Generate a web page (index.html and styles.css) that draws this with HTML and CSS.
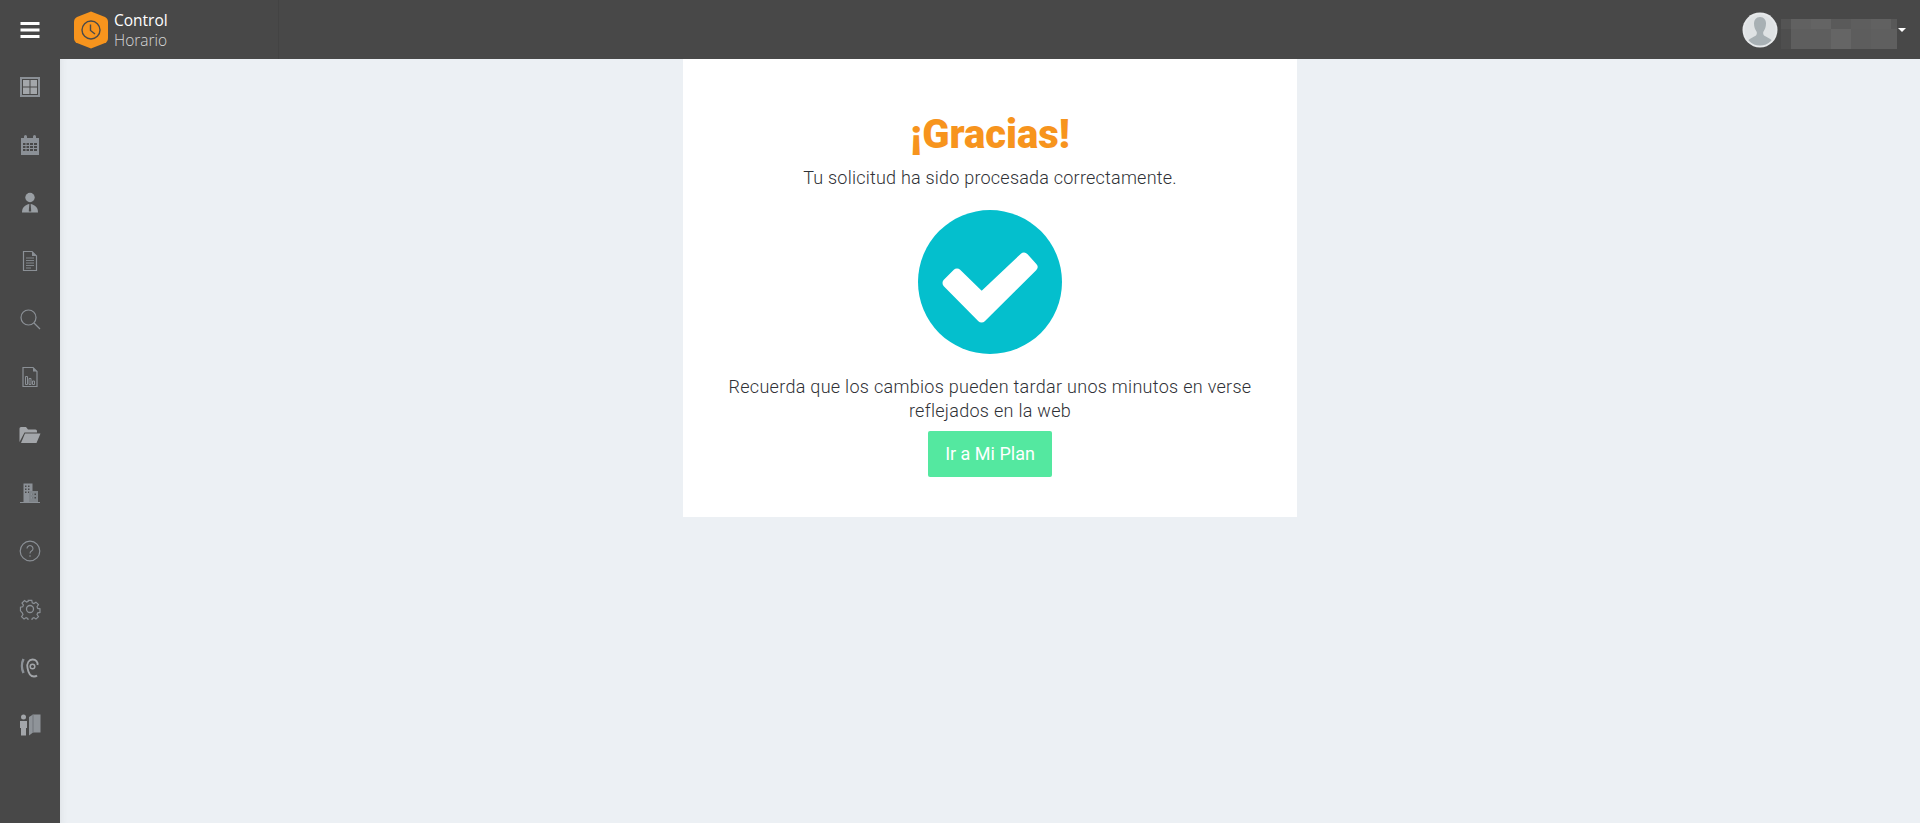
FILE: index.html
```html
<!DOCTYPE html>
<html lang="es">
<head>
    <meta charset="utf-8">
    <meta name="viewport" content="width=device-width, initial-scale=1">
    <title>Control Horario</title>
    <link rel="stylesheet" href="styles.css">
</head>
<body>
    <div class="page">
        <header class="topbar">
            <div class="menu_toggle">
                <svg width="20" height="16" viewBox="0 0 20 16"><path d="M0.500 1.500h19M0.500 8h19M0.500 14.500h19" stroke="#fff" stroke-width="3" fill="none"/></svg>
            </div>
            <div class="brand">
                <svg class="brand_logo" width="34" height="38" viewBox="0 0 34 38">
                    <path d="M17 0.500 L31 6 Q34 7.500 34 11 L34 27 Q34 30.500 31 32 L17 37.500 L3 32 Q0 30.500 0 27 L0 11 Q0 7.500 3 6 Z" fill="#f7941d"/>
                    <circle cx="17" cy="19" r="9" fill="none" stroke="#4a4a4a" stroke-width="1.400"/>
                    <path d="M16.500 13.500 V19.500 L21 23" fill="none" stroke="#4a4a4a" stroke-width="1.400"/>
                </svg>
                <div class="brand_name">
                    <span class="brand_top">Control</span>
                    <span class="brand_sub">Horario</span>
                </div>
            </div>
            <div class="user_box">
                <svg class="user_avatar" width="36" height="36" viewBox="0 0 36 36">
                    <circle cx="18" cy="18" r="17.500" fill="#e6e8ea"/>
                    <clipPath id="avatar"><circle cx="18" cy="18" r="15.500"/></clipPath>
                    <g clip-path="url(#avatar)">
                        <rect width="36" height="36" fill="#dfe2e4"/>
                        <path d="M18 5c-4 0-6 3-6 6.500 0 3 1 6 2.500 8 .6 1 .5 3-.5 4-2 1.500-6 2.500-8 5v8h24v-8c-2-2.500-6-3.500-8-5-1-1-1.100-3-.5-4 1.500-2 2.500-5 2.500-8C24 8 22 5 18 5z" fill="#a8b0b4"/>
                    </g>
                </svg>
                <svg class="user_blur" width="116" height="30" viewBox="0 0 116 30">
                    <rect x="0" y="0" width="10" height="10" fill="#545454"/>
                    <rect x="10" y="0" width="20" height="10" fill="#616161"/>
                    <rect x="30" y="0" width="20" height="10" fill="#646464"/>
                    <rect x="50" y="0" width="20" height="10" fill="#5a5a5a"/>
                    <rect x="70" y="0" width="20" height="10" fill="#5e5e5e"/>
                    <rect x="90" y="0" width="20" height="10" fill="#616161"/>
                    <rect x="110" y="0" width="6" height="10" fill="#585858"/>
                    <rect x="0" y="10" width="10" height="20" fill="#4e4e4e"/>
                    <rect x="10" y="10" width="40" height="20" fill="#5e5e5e"/>
                    <rect x="50" y="10" width="20" height="20" fill="#656565"/>
                    <rect x="70" y="10" width="20" height="20" fill="#5d5d5d"/>
                    <rect x="90" y="10" width="26" height="20" fill="#5f5f5f"/>
                </svg>
                <span class="caret"></span>
            </div>
        </header>

        <nav class="sidebar">
            <a class="side_item"><svg width="20" height="20" viewBox="0 0 20 20"><path fill-rule="evenodd" d="M0 0h20v20H0z M2 2v16h16V2z" fill="#8b9096"/><path d="M3 3h6.500v6.500H3z M10.500 3H17v6.500h-6.500z M3 10.500h6.500V17H3z M10.500 10.500H17V17h-6.500z" fill="#a3a6aa"/></svg></a>
            <a class="side_item"><svg width="22" height="22" viewBox="0 0 22 22"><path fill-rule="evenodd" d="M2 4h3V2.500a1.500 1.500 0 0 1 3 0V4h6V2.500a1.500 1.500 0 0 1 3 0V4h3v17H2z M4 9v2h2.500V9z M7.500 9v2H10V9z M11 9v2h3V9z M15 9v2h3V9z M4 12v2h2.500v-2z M7.500 12v2H10v-2z M11 12v2h3v-2z M15 12v2h3v-2z M4 15v2h2.500v-2z M7.500 15v2H10v-2z M11 15v2h3v-2z M15 15v2h3v-2z" fill="#8b9096"/></svg></a>
            <a class="side_item"><svg width="18" height="22" viewBox="0 0 18 22"><circle cx="9" cy="5.500" r="4.700" fill="#9a9fa4"/><path d="M1 20.500c0-5 2.500-7 7-8.500h2c4.500 1.500 7 3.500 7 8.500z" fill="#9a9fa4"/><path d="M8.300 12h1.400l.5 7.500H7.800z" fill="#4a4a4a"/></svg></a>
            <a class="side_item"><svg width="18" height="22" viewBox="0 0 18 22"><path d="M2.500 1.500h8.500l4.500 4.500v14.500h-13z" fill="none" stroke="#8b9096" stroke-width="1.200"/><path d="M11 1.500v4.500h4.500" fill="#8b9096"/><path d="M5 8h8M5 10.500h8M5 13h8M5 15.500h8M5 18h5" stroke="#80858a" stroke-width="1"/></svg></a>
            <a class="side_item"><svg width="22" height="22" viewBox="0 0 22 22"><circle cx="9.500" cy="9.500" r="7.500" fill="none" stroke="#8b9096" stroke-width="1.200"/><path d="M15 15l6 6" stroke="#8b9096" stroke-width="1.200"/></svg></a>
            <a class="side_item"><svg width="18" height="22" viewBox="0 0 18 22"><path d="M2 1.500h10l4 4v15H2z" fill="none" stroke="#8b9096" stroke-width="1.200"/><path d="M12 1.500v4h4" fill="#8b9096"/><path d="M4.500 18.500v-8h2v8zM8 18.500v-6h2v6zM11.500 18.500v-3.500h2v3.500z" fill="none" stroke="#8b9096" stroke-width="1"/></svg></a>
            <a class="side_item"><svg width="22" height="18" viewBox="0 0 22 18"><path d="M0.500 16V2.500A1.500 1.500 0 0 1 2 1h5l2 2.500h7.500A1.500 1.500 0 0 1 18 5v1.500H5.500zM2 17l4-9.500h15.500L17.500 17z" fill="#a3a6aa"/></svg></a>
            <a class="side_item"><svg width="20" height="20" viewBox="0 0 20 20"><path fill-rule="evenodd" d="M3.500 0.500h9v18.500h-9z M5 2.500v1.500h1.500V2.500z M8 2.500v1.500h1.500V2.500z M5 5.500V7h1.500V5.500z M8 5.500V7h1.500V5.500z M5 8.500V10h1.500V8.500z M8 8.500V10h1.500V8.500z" fill="#8b9096"/><path fill-rule="evenodd" d="M9 8h9v11H9z M11 10.500v1.500h1.500v-1.500z M14.500 10.500v1.500H16v-1.500z M11 14v1.500h1.500V14z M14.500 14v1.500H16V14z" fill="#7f8489"/><path d="M0 19.500h20" stroke="#8b9096"/></svg></a>
            <a class="side_item"><svg width="22" height="22" viewBox="0 0 22 22"><circle cx="11" cy="11" r="9.800" fill="none" stroke="#8b9096" stroke-width="1.200"/><path d="M8 8.500a3 3 0 1 1 4.500 2.600c-1 .6-1.500 1.200-1.500 2.400" fill="none" stroke="#8b9096" stroke-width="1.100"/><circle cx="11" cy="16" r=".8" fill="#8b9096"/></svg></a>
            <a class="side_item"><svg width="22" height="22" viewBox="0 0 22 22"><circle cx="11" cy="11" r="3.500" fill="none" stroke="#8b9096" stroke-width="1.300"/><path d="M9 1.500h4l.5 2.700 1.800.8 2.300-1.600 2.800 2.800-1.600 2.300.8 1.800 2.500.5v4l-2.500.5-.8 1.800 1.600 2.300-2.800 2.800-2.300-1.600-1.800.8-.5 2.500H9l-.5-2.500-1.800-.8-2.300 1.600-2.800-2.800 1.600-2.300-.8-1.800L.4 13V9l2.500-.5.8-1.800-1.600-2.300 2.800-2.800 2.300 1.600 1.800-.8z" transform="translate(1.100 1.100) scale(.9)" fill="none" stroke="#8b9096" stroke-width="1.300"/></svg></a>
            <a class="side_item"><svg width="20" height="22" viewBox="0 0 20 22"><path d="M17.500 9C18 6 16 3.500 12.500 3.500 9 3.500 6.500 7 7.500 12 8 15 9 20.500 14 20.500 15.500 20.500 16.500 20 17 19.500" fill="none" stroke="#a3a6aa" stroke-width="1.800"/><circle cx="12.500" cy="10.500" r="2.300" fill="none" stroke="#a3a6aa" stroke-width="1.500"/><path d="M3.500 3C1.500 7 1.500 13 3.500 17" fill="none" stroke="#8b9096" stroke-width="2.500"/></svg></a>
            <a class="side_item"><svg width="22" height="22" viewBox="0 0 22 22"><circle cx="4.500" cy="3" r="2.500" fill="#a3a6aa"/><path d="M1 7h7v7H7v7.500H2V14H1z" fill="#a3a6aa"/><path d="M10 3l4-2.500h7.500v18H14l-4 3z" fill="#8f9499"/><path d="M14 .5v18" stroke="#70757a"/></svg></a>
        </nav>

        <main class="content">
            <section class="thanks_card">
                <h1>¡Gracias!</h1>
                <p class="thanks_lead">Tu solicitud ha sido procesada correctamente.</p>
                <div class="check_circle">
                    <svg width="144" height="144" viewBox="0 0 144 144">
                        <circle cx="72" cy="72" r="72" fill="#04bfcd"/>
                        <path d="M63.600 108 L29 73 L39 63 L63.600 87 L106 47 L115 57 Z" fill="#fff" stroke="#fff" stroke-width="9" stroke-linejoin="round"/>
                    </svg>
                </div>
                <p class="thanks_note">Recuerda que los cambios pueden tardar unos minutos en verse reflejados en la web</p>
                <a class="btn_plan" href="#">Ir a Mi Plan</a>
            </section>
        </main>
    </div>
</body>
</html>
```

FILE: styles.css
```css
body {
    margin: 0;
    font-family: Roboto, "Liberation Sans", sans-serif;
    color: #2f3136;
    background-color: #ecf0f4;
}

.page {
    display: grid;
    grid-template-columns: 60px 1fr;
    grid-template-rows: 59px 1fr;
    height: 100vh;
    overflow: hidden;
}

/* top bar */
.topbar {
    grid-column: 1 / 3;
    display: flex;
    align-items: center;
    background-color: #484848;
}

.menu_toggle {
    width: 60px;
    display: flex;
    justify-content: center;
}

.brand {
    width: 219px;
    height: 59px;
    display: flex;
    align-items: center;
    box-sizing: border-box;
    padding-left: 14px;
    gap: 6px;
    border-right: 1px solid #434343;
}

.brand_name {
    display: flex;
    flex-direction: column;
    font-family: "Open Sans", sans-serif;
    font-size: 15.5px;
    line-height: 20px;
    color: #fff;
}

.brand_sub {
    font-weight: 300;
    color: #d8d8d8;
}

.user_box {
    margin-left: auto;
    display: flex;
    align-items: center;
    padding-right: 14px;
}

.user_avatar {
    margin-right: 3px;
}

.user_blur {
    margin-top: 9px;
}

.caret {
    width: 0;
    height: 0;
    margin-left: 1px;
    border-left: 4px solid transparent;
    border-right: 4px solid transparent;
    border-top: 4px solid #fff;
}

/* side menu */
.sidebar {
    display: flex;
    flex-direction: column;
    background-color: #484848;
}

.side_item {
    height: 58px;
    box-sizing: border-box;
    padding-bottom: 2px;
    flex-shrink: 0;
    display: flex;
    align-items: center;
    justify-content: center;
}

/* main */
.content {
    display: flex;
    flex-direction: column;
    align-items: center;
    box-shadow: inset 8px 0 8px -8px rgba(0, 0, 0, 0.08);
}

.thanks_card {
    width: 614px;
    box-sizing: border-box;
    padding: 56px 40px 40px;
    background-color: #fff;
    text-align: center;
}

.thanks_card h1 {
    margin: 0;
    font-size: 40px;
    line-height: 40px;
    font-weight: 900;
    color: #f7941d;
}

.thanks_lead,
.thanks_note {
    margin: 0;
    font-size: 18px;
    line-height: 24px;
    font-weight: 300;
    letter-spacing: 0.22px;
}

.thanks_lead {
    margin-top: 11px;
}

.check_circle {
    height: 144px;
    margin-top: 20px;
}

.thanks_note {
    margin-top: 21px;
    letter-spacing: 0.29px;
}

.btn_plan {
    display: block;
    width: 124px;
    height: 46px;
    margin: 8px auto 0;
    border-radius: 2px;
    background-color: #54e8a0;
    color: #fff;
    font-size: 18px;
    line-height: 46px;
    text-decoration: none;
}
```
